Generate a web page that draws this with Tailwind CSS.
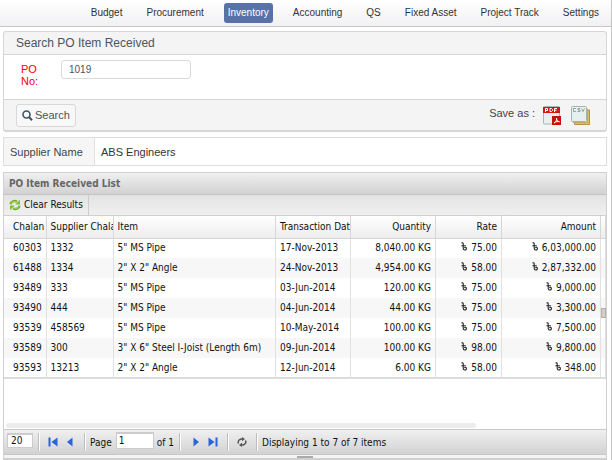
<!DOCTYPE html>
<html lang="en">
<head>
<meta charset="utf-8">
<title>PO Item Received</title>
<script src="https://cdn.jsdelivr.net/npm/@tailwindcss/browser@4"></script>
</head>
<body class="min-h-screen flex flex-col border-r border-[#c4c4c4] bg-white font-['Liberation_Sans',Arial,sans-serif] text-[11px] leading-3 text-[#444]">
<svg class="hidden">
  <symbol id="taka" viewBox="0 0 6 9"><path d="M.5 1.200C1.200.5 2.200.8 2.200 1.800V6.200C2.200 8.600 5.300 8.700 5.400 6.500C5.400 5 3.800 4.800 3.600 6.200M.4 3.800H4.800" fill="none" stroke="#222" stroke-width="1.100"/></symbol>
</svg>

<nav class="flex h-[27px] shrink-0 items-center justify-end gap-4 border-b border-[#c8c8c8] bg-linear-to-b from-white to-[#f1f1f3] pr-2 text-[10px] text-[#333]">
  <a href="#" class="px-1 py-1">Budget</a>
  <a href="#" class="px-1 py-1">Procurement</a>
  <a href="#" class="rounded-[3px] bg-[#5872a7] px-1 py-1 text-white">Inventory</a>
  <a href="#" class="px-1 py-1">Accounting</a>
  <a href="#" class="px-1 py-1">QS</a>
  <a href="#" class="px-1 py-1">Fixed Asset</a>
  <a href="#" class="px-1 py-1">Project Track</a>
  <a href="#" class="px-1 py-1">Settings</a>
</nav>

<main class="flex grow flex-col pt-1 pr-1 pl-[3px]">
  <form class="rounded-[3px] border border-b-2 border-[#d6d6d6] bg-[#f4f4f4]">
    <h1 class="flex h-[23px] items-center border-b border-[#d6d6d6] pl-3 text-[12px] text-[#4a5560]">Search PO Item Received</h1>
    <div class="flex h-11 items-start bg-white pt-[5px] pl-[17px]">
      <label for="po" class="w-10 pt-[3px] text-[red]"><span class="block w-5">PO No:</span></label>
      <input id="po" value="1019" class="h-[19px] w-[130px] rounded-[3px] border border-[#dadada] bg-white px-[7px] text-[10px] text-[#4a5560]">
    </div>
    <div class="flex h-[31px] items-center justify-between border-t border-[#d6d6d6] pr-4 pl-3">
      <button type="button" class="flex h-[23px] items-center gap-[2px] rounded-[3px] border border-[#d8d8d8] bg-[#f8f8f8] px-[5px] text-[#4a5560]">
        <svg class="size-[11px]" viewBox="0 0 11 11" fill="none" stroke="#3f5263"><circle cx="4.500" cy="4.500" r="3.500" stroke-width="1.600"/><path d="M7 7l3 3.200" stroke-width="2"/></svg>Search
      </button>
      <div class="flex items-center gap-2">
        <span class="pb-1">Save as :</span>
        <button type="button" aria-label="Save as PDF">
          <svg class="block h-[19px] w-[18px]" viewBox="0 0 18 19"><rect x=".5" y=".5" width="16" height="17.500" rx="1" fill="#e6f0f0" stroke="#a9b5b5"/><path d="M0 1h17v6H0z" fill="#d91414"/><path d="M2.500 6V2.500h2v2h-2M7 2.500v3h1.500l1-1v-1l-1-1zM11.500 6V2.500h2.500M11.500 4.300h2" fill="none" stroke="#fff"/><path d="M9 10h9v9H9z" fill="#c91010"/><path d="M11 17c2-1 3-3 2.500-5c0 2 1 3.500 3 3.700c-2-.4-4 0-5.500 1.300" fill="none" stroke="#fff"/></svg>
        </button>
        <button type="button" aria-label="Save as CSV" class="pl-[2px]">
          <svg class="block h-[19px] w-[19px]" viewBox="0 0 19 19"><path d="M5 4h13.500v14.500H3.500V16z" fill="#e2b964" stroke="#b99345"/><path d="M2 3h14.500v13.500H2z" fill="#f5e3b5" stroke="#c9a75c"/><rect x=".5" y=".5" width="15" height="15" rx="1" fill="#e6f0ef" stroke="#a5b3b3"/><path d="M5 2.500H2.500v3H5M9 2.500H7V4h2v1.500H6.500M10.500 2.500l1.500 3 1.500-3" fill="none" stroke="#8c9b9b" stroke-width=".9"/></svg>
        </button>
      </div>
    </div>
  </form>

  <dl class="mt-[5px] flex h-[29px] shrink-0 border border-[#dedede]">
    <dt class="flex w-[91px] items-center border-r border-[#dedede] bg-[#f6f6f6] pl-[6px]">Supplier Name</dt>
    <dd class="flex items-center pl-[6px] text-[#333]">ABS Engineers</dd>
  </dl>

  <section class="mt-[6px] flex grow flex-col border border-b-2 border-[#d0d0d0] font-['DejaVu_Sans_Condensed','DejaVu_Sans',sans-serif] text-[10px] text-[#111]">
    <h2 class="flex h-[22px] items-center border-b border-[#c4c4c4] bg-linear-to-b from-[#f0f0f0] to-[#d2d2d2] pl-[5px] font-bold text-[#666]">PO Item Received List</h2>
    <div class="flex h-[21px] border-b border-[#d0d0d0] bg-linear-to-b from-[#e3e3e3] to-[#f0f0f0]">
      <button type="button" class="flex items-center gap-[3px] border-r border-[#ccc] px-[5px]">
        <svg class="size-3" viewBox="0 0 12 12"><path d="M1.500 5.200C2 2.200 5.500 1.200 8 2.800M10.500 6.800C10 9.800 6.500 10.800 4 9.200" fill="none" stroke="#6fae22" stroke-width="2.400"/><path d="M11 .8v4.700H6.300zM1 11.200V6.500h4.700z" fill="#7fbe2c"/><path d="M2 4.600C2.800 2.600 5.400 2 7.500 3M10 7.400C9.200 9.400 6.600 10 4.500 9" fill="none" stroke="#b4e05c" stroke-width=".8"/></svg>Clear Results
      </button>
    </div>
    <div class="relative grow overflow-hidden">
      <table class="w-full table-fixed border-b-2 border-[#dcdcdc] whitespace-nowrap [&_svg]:mr-1 [&_svg]:inline [&_svg]:h-[9px] [&_svg]:w-[6px] [&_svg]:align-baseline [&_td]:h-5 [&_td]:overflow-hidden [&_td]:border-r [&_td]:border-[#e0e0e0] [&_td]:px-1 [&_td:first-child]:pl-[9px] [&_td:nth-child(n+5)]:text-right [&_th]:h-[22px] [&_th]:overflow-hidden [&_th]:border-r [&_th]:border-b [&_th]:border-[#d6d6d6] [&_th]:pl-1 [&_th]:text-left [&_th]:font-normal [&_th:first-child]:pl-[9px] [&_th:nth-child(n+5)]:pr-1 [&_th:nth-child(n+5)]:text-right">
        <colgroup><col class="w-[42px]"><col class="w-[67px]"><col><col class="w-[75px]"><col class="w-[85px]"><col class="w-[66px]"><col class="w-[99px]"><col class="w-[5px]"></colgroup>
        <thead class="bg-linear-to-b from-white to-[#ededee]">
          <tr><th>Chalan</th><th>Supplier Chala</th><th>Item</th><th>Transaction Dat</th><th>Quantity</th><th>Rate</th><th>Amount</th><th></th></tr>
        </thead>
        <tbody class="[&>tr:nth-child(even)]:bg-[#f7f7f7]">
          <tr><td>60303</td><td>1332</td><td>5" MS Pipe</td><td>17-Nov-2013</td><td>8,040.00 KG</td><td><svg><use href="#taka"/></svg>75.00</td><td><svg><use href="#taka"/></svg>6,03,000.00</td><td></td></tr>
          <tr><td>61488</td><td>1334</td><td>2" X 2" Angle</td><td>24-Nov-2013</td><td>4,954.00 KG</td><td><svg><use href="#taka"/></svg>58.00</td><td><svg><use href="#taka"/></svg>2,87,332.00</td><td></td></tr>
          <tr><td>93489</td><td>333</td><td>5" MS Pipe</td><td>03-Jun-2014</td><td>120.00 KG</td><td><svg><use href="#taka"/></svg>75.00</td><td><svg><use href="#taka"/></svg>9,000.00</td><td></td></tr>
          <tr><td>93490</td><td>444</td><td>5" MS Pipe</td><td>04-Jun-2014</td><td>44.00 KG</td><td><svg><use href="#taka"/></svg>75.00</td><td><svg><use href="#taka"/></svg>3,300.00</td><td></td></tr>
          <tr><td>93539</td><td>458569</td><td>5" MS Pipe</td><td>10-May-2014</td><td>100.00 KG</td><td><svg><use href="#taka"/></svg>75.00</td><td><svg><use href="#taka"/></svg>7,500.00</td><td></td></tr>
          <tr><td>93589</td><td>300</td><td>3" X 6" Steel I-Joist (Length 6m)</td><td>09-Jun-2014</td><td>100.00 KG</td><td><svg><use href="#taka"/></svg>98.00</td><td><svg><use href="#taka"/></svg>9,800.00</td><td></td></tr>
          <tr><td>93593</td><td>13213</td><td>2" X 2" Angle</td><td>12-Jun-2014</td><td>6.00 KG</td><td><svg><use href="#taka"/></svg>58.00</td><td><svg><use href="#taka"/></svg>348.00</td><td></td></tr>
        </tbody>
      </table>
      <div class="absolute bottom-px left-[2px] h-[5px] w-[78%] rounded-full bg-[#ececec]"></div>
      <div class="absolute top-[92px] right-0 h-[10px] w-[5px] border border-[#b5b1a9] bg-[#d3cfc7]"></div>
    </div>
    <div class="flex h-[26px] items-center border-t border-b border-[#c8c8c8] bg-linear-to-b from-[#f0f0f0] to-[#d2d2d2] pl-[3px]">
      <input aria-label="Rows per page" value="20" class="mb-1 h-[15px] w-[26px] border border-t-2 border-[#ccc] bg-white px-[3px]">
      <span class="ml-[5px] h-[18px] w-[2px] border-l border-[#bdbdbd] bg-white"></span>
      <button type="button" aria-label="First page" class="ml-2"><svg class="block h-[10px] w-[10px]" viewBox="0 0 10 10" fill="#2765d8"><path d="M.5.500h2v9h-2zM9.500.5v9L3.500 5z"/></svg></button>
      <button type="button" aria-label="Previous page" class="ml-[9px]"><svg class="block h-[10px] w-[6px]" viewBox="0 0 6 10" fill="#2765d8"><path d="M5.500.5v9L0 5z"/></svg></button>
      <span class="ml-[11px] h-[18px] w-[2px] border-l border-[#bdbdbd] bg-white"></span>
      <label for="page" class="ml-1 pt-[2px]">Page</label>
      <input id="page" value="1" class="mb-1 ml-1 h-[17px] w-[38px] border border-t-2 border-[#ccc] bg-white px-[2px]">
      <span class="ml-[3px] pt-[2px]">of 1</span>
      <span class="ml-[5px] h-[18px] w-[2px] border-l border-[#bdbdbd] bg-white"></span>
      <button type="button" aria-label="Next page" class="ml-3"><svg class="block h-[10px] w-[6px]" viewBox="0 0 6 10" fill="#2765d8"><path d="M.5.5v9L6 5z"/></svg></button>
      <button type="button" aria-label="Last page" class="ml-[9px]"><svg class="block h-[10px] w-[10px]" viewBox="0 0 10 10" fill="#2765d8"><path d="M7.500.5h2v9h-2zM.5.5v9l6-4.500z"/></svg></button>
      <span class="ml-[9px] h-[18px] w-[2px] border-l border-[#bdbdbd] bg-white"></span>
      <button type="button" aria-label="Refresh" class="ml-2"><svg class="block size-[10px]" viewBox="0 0 10 10"><path d="M1.500 6.500C.3 3.500 3 1.500 5.800 2M8.500 3.500C9.700 6.500 7 8.500 4.200 8" fill="none" stroke="#555" stroke-width="1.500"/><path d="M5 0l3 2-3 2.300zM5 10L2 8l3-2.300z" fill="#555"/></svg></button>
      <span class="ml-[9px] h-[18px] w-[2px] border-l border-[#bdbdbd] bg-white"></span>
      <span class="ml-1 pt-[2px]">Displaying 1 to 7 of 7 items</span>
    </div>
    <div class="flex h-[3px] items-end justify-center bg-[#f4f4f4]"><span class="h-[2px] w-4 bg-[#aaa]"></span></div>
  </section>
</main>
</body>
</html>
